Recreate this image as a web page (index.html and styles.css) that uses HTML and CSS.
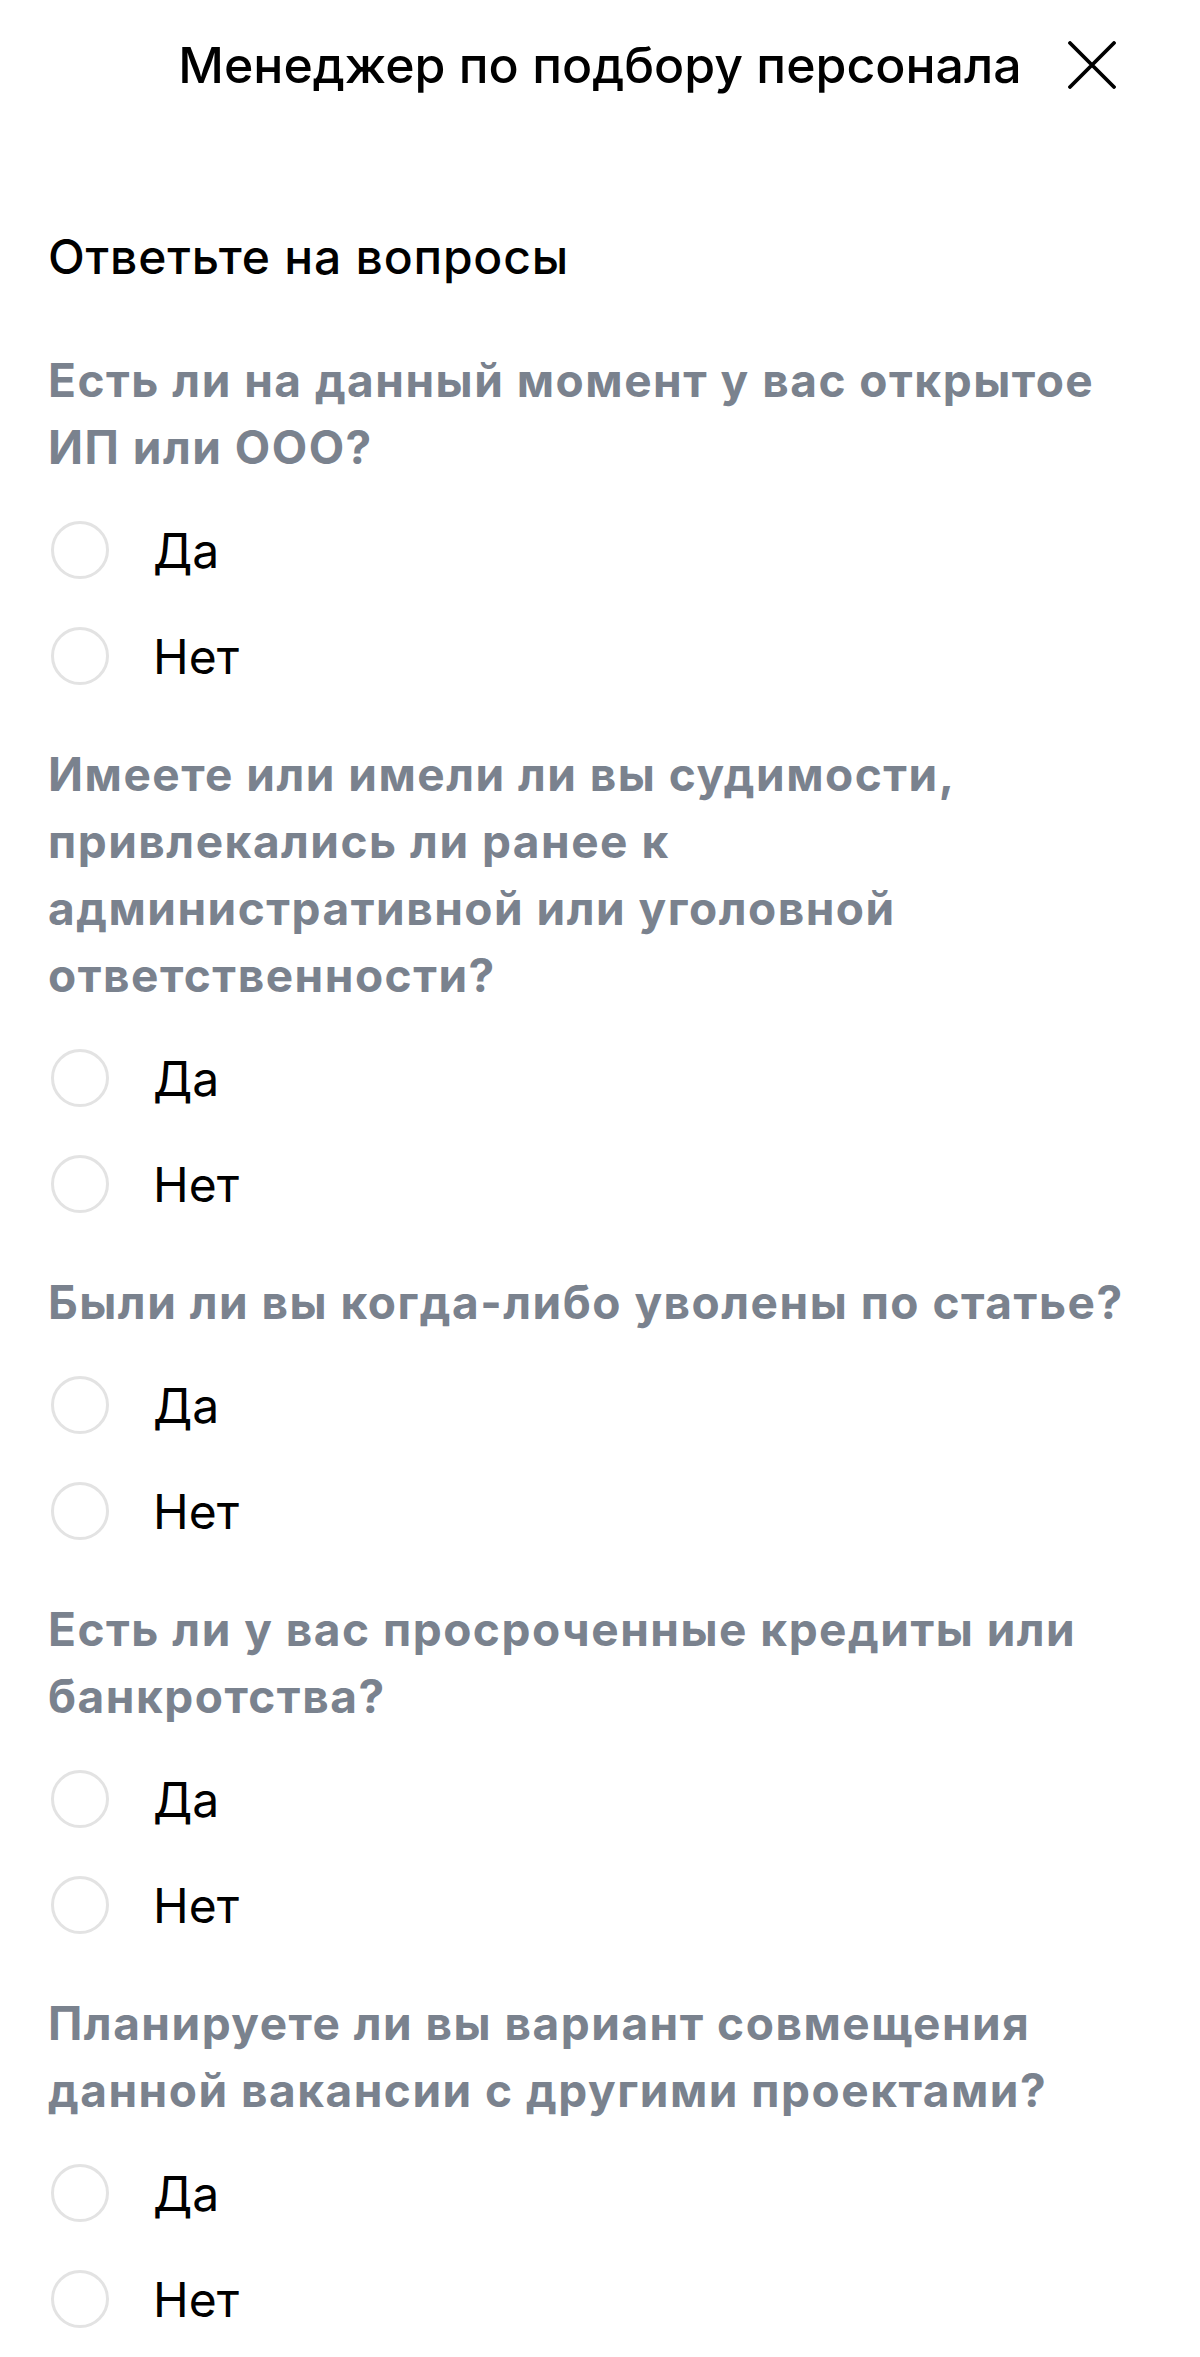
FILE: index.html
```html
<!DOCTYPE html>
<html lang="ru">
<head>
    <meta charset="UTF-8">
    <meta name="viewport" content="width=device-width, initial-scale=1.0">
    <title>Менеджер по подбору персонала</title>
    <link rel="stylesheet" href="styles.css">
</head>
<body>
    <header class="header">
        <span></span>
        <h1 class="title">Менеджер по подбору персонала</h1>
        <button class="close" type="button" aria-label="Закрыть">
            <svg width="48" height="48" viewBox="0 0 48 48" fill="none">
                <path d="M2 2 L46 46 M46 2 L2 46" stroke="#000" stroke-width="3.8" stroke-linecap="round"/>
            </svg>
        </button>
    </header>

    <main class="form">
        <h2 class="subtitle">Ответьте на вопросы</h2>

        <!-- вопрос 1 -->
        <div class="question">
            <p class="question-text">Есть ли на данный момент у вас открытое ИП или ООО?</p>
            <label class="option"><input type="radio" name="q1"> Да</label>
            <label class="option"><input type="radio" name="q1"> Нет</label>
        </div>

        <!-- вопрос 2 -->
        <div class="question">
            <p class="question-text">Имеете или имели ли вы судимости, привлекались ли ранее к административной или уголовной ответственности?</p>
            <label class="option"><input type="radio" name="q2"> Да</label>
            <label class="option"><input type="radio" name="q2"> Нет</label>
        </div>

        <!-- вопрос 3 -->
        <div class="question">
            <p class="question-text">Были ли вы когда-либо уволены по статье?</p>
            <label class="option"><input type="radio" name="q3"> Да</label>
            <label class="option"><input type="radio" name="q3"> Нет</label>
        </div>

        <!-- вопрос 4 -->
        <div class="question">
            <p class="question-text">Есть ли у вас просроченные кредиты или банкротства?</p>
            <label class="option"><input type="radio" name="q4"> Да</label>
            <label class="option"><input type="radio" name="q4"> Нет</label>
        </div>

        <!-- вопрос 5 -->
        <div class="question">
            <p class="question-text">Планируете ли вы вариант совмещения данной вакансии с другими проектами?</p>
            <label class="option"><input type="radio" name="q5"> Да</label>
            <label class="option"><input type="radio" name="q5"> Нет</label>
        </div>
    </main>
</body>
</html>
```

FILE: styles.css
```css
body {
    margin: 0;
    font-family: Inter, "Liberation Sans", Arial, sans-serif;
    background-color: #fff;
    color: #000;
}
.header {
    display: grid;
    grid-template-columns: 1fr auto 1fr;
    align-items: center;
    height: 130px;
    padding: 0 84px;
}
.title {
    margin: 0;
    font-size: 50px;
    font-weight: 500;
    line-height: 1.2;
    white-space: nowrap;
}
.close {
    justify-self: end;
    display: flex;
    padding: 0;
    border: none;
    background: none;
    cursor: pointer;
}
.form {
    padding: 0 48px 20px;
}
.subtitle {
    margin: 100px 0 0;
    font-size: 48px;
    font-weight: 500;
    line-height: 54px;
    letter-spacing: 0.8px;
}
.question {
    display: flex;
    flex-direction: column;
    margin-bottom: 32px;
}
.question:first-of-type {
    margin-top: 63px;
}
.question-text {
    margin: 0 0 16px;
    font-size: 46px;
    font-weight: bold;
    line-height: 67px;
    letter-spacing: 1.5px;
    color: #7a828e;
}
.option {
    display: flex;
    align-items: center;
    height: 106px;
    font-size: 48px;
    color: #000;
    cursor: pointer;
}
.option input[type="radio"] {
    appearance: none;
    -webkit-appearance: none;
    width: 58px;
    height: 58px;
    margin: 0 44px 0 3px;
    border: 3px solid #e3e3e3;
    border-radius: 50%;
    box-sizing: border-box;
    flex-shrink: 0;
}
.option input[type="radio"]:checked {
    border: 17px solid #7a828e;
}
```
